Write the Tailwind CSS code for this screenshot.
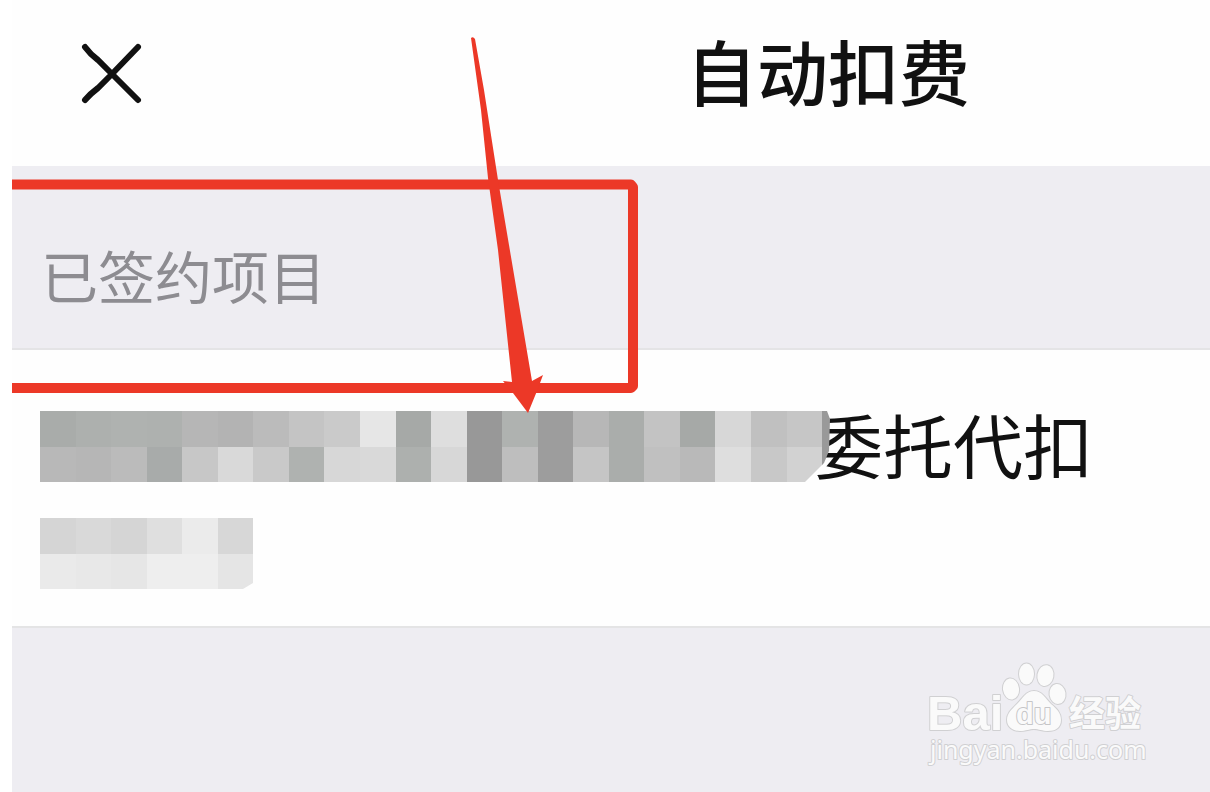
<!DOCTYPE html>
<html lang="zh-CN">
<head>
<meta charset="utf-8">
<meta name="viewport" content="width=device-width, initial-scale=1">
<title>自动扣费</title>
<script src="https://cdn.jsdelivr.net/npm/@tailwindcss/browser@4"></script>
</head>
<body class="bg-white font-['Noto_Sans_CJK_SC',sans-serif]">
<div class="relative flex min-h-screen flex-col overflow-hidden pl-3">
  <header class="flex items-center bg-[#fefefe] pt-5 pb-12 pl-16">
    <button type="button" aria-label="关闭" class="flex size-[72px] items-center justify-center">
      <svg class="size-[72px]" viewBox="0 0 72 72" fill="none" stroke="#111" stroke-linecap="round" aria-hidden="true">
        <path stroke-width="6" d="M9 14 Q14 21 22 27 L36 41 L62 67 M9 67 Q14 61 22 55 L36 41 L62 14"/>
      </svg>
    </button>
    <h1 class="ml-[538px] text-[71px] leading-[98px] font-medium whitespace-nowrap text-[#111]">自动扣费</h1>
  </header>

  <main class="flex grow flex-col bg-[#eeedf2]">
    <h2 class="border-b-2 border-[#e4e4e6] pt-[68px] pb-[34px] pl-[29px] text-[57px] leading-[80px] text-[#8d8c91]">已签约项目</h2>
    <section class="border-b-2 border-[#e4e4e5] bg-[#fefefe] pt-[46px] pb-[37px] pl-7">
      <a href="#" class="flex flex-col gap-[22px]">
        <span class="flex items-center whitespace-nowrap">
          <svg id="name" class="relative z-10 h-[71px] w-[790px] shrink-0" viewBox="0 0 790 71" role="img" aria-label="已隐藏的名称"></svg>
          <span class="-ml-[17px] pb-1 text-[70px] leading-[96px] text-[#111]">委托代扣</span>
        </span>
        <svg id="detail" class="h-[71px] w-[213px]" viewBox="0 0 213 71" role="img" aria-label="已隐藏的详情"></svg>
      </a>
    </section>
    <footer class="mt-auto flex justify-end pr-16 pb-6">
      <svg class="h-[110px] w-[222px]" viewBox="924 658 222 110" role="img" aria-label="Baidu 经验 jingyan.baidu.com">
        <g fill="#fafafa" stroke="#d0d0d2" stroke-width="2" paint-order="stroke" stroke-linejoin="round">
          <text x="927" y="730" font-family="Liberation Sans" font-weight="700" font-size="49">Bai</text>
          <ellipse cx="1011" cy="689" rx="8" ry="10.500" transform="rotate(-8 1011 689)"/>
          <ellipse cx="1026.500" cy="674" rx="7.500" ry="10.500"/>
          <ellipse cx="1045.500" cy="675.500" rx="8" ry="10.500" transform="rotate(10 1045 675)"/>
          <ellipse cx="1057.500" cy="694" rx="8" ry="10" transform="rotate(-8 1057 694)"/>
          <path d="M1034 691 C1042 691 1045 698 1051 704 C1057 709 1061 713 1061 720 C1061 728 1055 731 1048 731 C1042 731 1039 729 1034 729 C1029 729 1026 731 1020 731 C1013 731 1007 727 1007 720 C1007 713 1012 709 1017 704 C1023 698 1026 691 1034 691 Z"/>
          <text x="1016" y="724" font-family="Liberation Sans" font-weight="700" font-size="29" stroke="#c6c6c8">du</text>
          <text x="1069" y="727" font-family="Noto Sans CJK SC" font-weight="700" font-size="36">经验</text>
          <text x="930" y="759" font-family="Noto Sans" font-size="25">jingyan.baidu.com</text>
        </g>
      </svg>
    </footer>
  </main>

  <svg class="pointer-events-none absolute top-0 left-3 z-20 h-[420px] w-[640px]" viewBox="12 0 640 420" fill="#ec3827" aria-hidden="true">
    <path d="M0 184.500 H631 L633 187 V386 L631 388 H0" fill="none" stroke="#ec3827" stroke-width="10" stroke-linejoin="round"/>
    <path d="M471 38 Q473 36 475 39 L484 90 L498 180 L532 381 L543 375 L537 391 L528 413 L513 393 L503 381 L512 382 L498 250 L488 178 L481 110 Z"/>
  </svg>
</div>

<script>
  // Pixelated bars that hide private text: rows of grey cells with a cut corner.
  const ns = 'http://www.w3.org/2000/svg';
  function mosaic(id, rows, outline) {
    const svg = document.getElementById(id);
    const add = (parent, tag, attrs) => {
      const el = document.createElementNS(ns, tag);
      for (const key in attrs) el.setAttribute(key, attrs[key]);
      return parent.appendChild(el);
    };
    add(add(svg, 'clipPath', { id: id + '-clip' }), 'polygon', { points: outline });
    const group = add(svg, 'g', { 'clip-path': `url(#${id}-clip)` });
    rows.forEach((row, r) => row.split(' ').forEach((c, i) => {
      add(group, 'rect', { x: Math.round(i * 35.55), y: r * 36, width: 36, height: 36, fill: '#' + c });
    }));
  }
  mosaic('name', [
    'a9acaa adb0ae afb2b0 aeb1af b6b6b6 b3b3b3 bbbbbb c4c4c4 cacaca e6e6e6 a6a9a7 dedede 989898 afb2b0 9d9d9d b7b7b7 aaadab c3c3c3 a6a9a7 d7d7d7 c0c0c0 c6c6c6 999999',
    'b8b8b8 b6b6b6 bbbbbb a8abaa c7c7c7 d9d9d9 c9c9c9 afb2b0 d7d7d7 d9d9d9 adb0ae d7d7d7 989898 bebebe 9d9d9d c5c5c5 aaadab c0c0c0 b9b9b9 dedede c8c8c8 d2d2d2 999999'
  ], '0,0 787,0 790,8 789,40 784,52 765,71 0,71');
  mosaic('detail', [
    'd5d5d5 d9d9d9 d5d5d5 dfdfdf ebebeb d7d7d7',
    'eaeaea e8e8e8 e6e6e6 eeeeee eeeeee e5e5e5'
  ], '0,0 213,0 213,65 203,71 0,71');
</script>
</body>
</html>
